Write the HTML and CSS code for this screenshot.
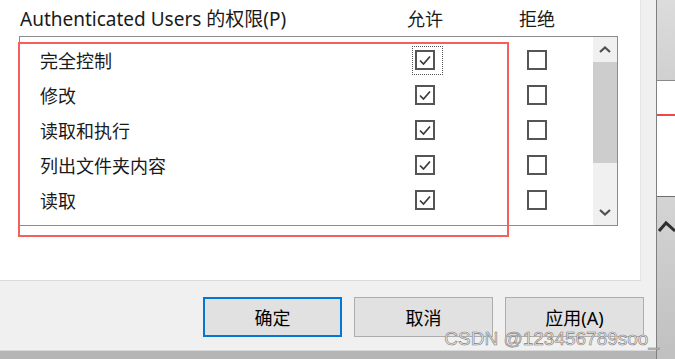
FILE: index.html
```html
<!DOCTYPE html>
<html lang="zh-CN">
<head>
    <meta charset="UTF-8">
    <meta name="viewport" content="width=device-width, initial-scale=1.0">
    <title>权限</title>
    <link rel="stylesheet" href="styles.css">
</head>

<body>

    <div class="dialog">
        <!-- Permission panel -->
        <div class="panel">
            <div class="perm-head">
                <span class="head-label">Authenticated Users 的权限(P)</span>
                <span class="head-col">允许</span>
                <span></span>
                <span class="head-col">拒绝</span>
            </div>

            <div class="perm-list">
                <div class="rows">
                    <div class="row">
                        <span class="label">完全控制</span>
                        <span class="box checked focus"><svg viewBox="0 0 16 16"><polyline points="3,8.5 6.5,12 13,4.5"/></svg></span>
                        <span></span>
                        <span class="box"></span>
                    </div>
                    <div class="row">
                        <span class="label">修改</span>
                        <span class="box checked"><svg viewBox="0 0 16 16"><polyline points="3,8.5 6.5,12 13,4.5"/></svg></span>
                        <span></span>
                        <span class="box"></span>
                    </div>
                    <div class="row">
                        <span class="label">读取和执行</span>
                        <span class="box checked"><svg viewBox="0 0 16 16"><polyline points="3,8.5 6.5,12 13,4.5"/></svg></span>
                        <span></span>
                        <span class="box"></span>
                    </div>
                    <div class="row">
                        <span class="label">列出文件夹内容</span>
                        <span class="box checked"><svg viewBox="0 0 16 16"><polyline points="3,8.5 6.5,12 13,4.5"/></svg></span>
                        <span></span>
                        <span class="box"></span>
                    </div>
                    <div class="row">
                        <span class="label">读取</span>
                        <span class="box checked"><svg viewBox="0 0 16 16"><polyline points="3,8.5 6.5,12 13,4.5"/></svg></span>
                        <span></span>
                        <span class="box"></span>
                    </div>
                    <!-- next row, scrolled out of view -->
                    <div class="row">
                        <span class="label"></span>
                        <span class="box"></span>
                        <span></span>
                        <span class="box"></span>
                    </div>
                </div>

                <!-- Scrollbar -->
                <div class="scrollbar">
                    <div class="sb-btn"><svg viewBox="0 0 12 7"><polyline points="1,6 6,1.5 11,6"/></svg></div>
                    <div class="sb-thumb"></div>
                    <div class="sb-track"></div>
                    <div class="sb-btn"><svg viewBox="0 0 12 7"><polyline points="1,1 6,5.5 11,1"/></svg></div>
                </div>
            </div>

            <!-- annotation -->
            <div class="mark"></div>
        </div>

        <!-- Buttons -->
        <div class="footer">
            <button class="btn default">确定</button>
            <button class="btn">取消</button>
            <button class="btn">应用(A)</button>
        </div>
        <div class="bottom-edge"></div>
    </div>

    <!-- window behind -->
    <div class="behind">
        <div class="behind-top"></div>
        <div class="behind-mid"><div class="red-line"></div></div>
        <div class="behind-low"><svg viewBox="0 0 18 20"><polyline points="2,18 9,10 18,18"/></svg></div>
    </div>

    <div class="watermark">CSDN @123456789soo_</div>

</body>

</html>
```

FILE: styles.css
```css
/* General Styles */
body {
    margin: 0;
    width: 675px;
    height: 359px;
    overflow: hidden;
    display: flex;
    background: #c4c4c4;
    font-family: 'Noto Sans', 'Noto Sans CJK SC', sans-serif;
    color: #1a1a1a;
    position: relative;
}

.dialog {
    width: 657px;
    display: flex;
    flex-direction: column;
    background: #f0f0f0;
}

.panel {
    position: relative;
    width: 641px;
    height: 281px;
    box-sizing: border-box;
    padding-left: 19px;
    background: #fff;
    border-right: 1px solid #e4e4e4;
    border-bottom: 1px solid #dadada;
}

/* Header */
.perm-head {
    display: grid;
    grid-template-columns: 386px 40px 72px 40px;
    height: 36px;
    align-items: center;
    font-size: 18px;
}

.head-label {
    padding-left: 1px;
    white-space: nowrap;
    font-size: 19px;
}

.head-col {
    text-align: center;
    white-space: nowrap;
}

/* List */
.perm-list {
    width: 599px;
    height: 190px;
    box-sizing: border-box;
    border: 1px solid #8c8c8c;
    display: flex;
    overflow: hidden;
}

.rows {
    flex: 1;
    padding-top: 5px;
}

.row {
    display: grid;
    grid-template-columns: 395px 20px 92px 20px;
    height: 35px;
    align-items: center;
}

.label {
    padding-left: 20px;
    font-size: 18px;
}

.box {
    position: relative;
    width: 20px;
    height: 20px;
    box-sizing: border-box;
    border: 2px solid #555;
    background: #fff;
}

.box svg {
    display: block;
    width: 16px;
    height: 16px;
    fill: none;
    stroke: #3a3a3a;
    stroke-width: 1.7;
}

.focus::after {
    content: "";
    position: absolute;
    left: -5px;
    top: -6px;
    right: -10px;
    bottom: -7px;
    border: 1px dotted #555;
}

/* Scrollbar */
.scrollbar {
    width: 24px;
    display: flex;
    flex-direction: column;
    background: #f0f0f0;
}

.sb-btn {
    height: 25px;
    display: flex;
    align-items: center;
    justify-content: center;
}

.sb-btn svg {
    width: 12px;
    height: 7px;
    fill: none;
    stroke: #505050;
    stroke-width: 2.2;
}

.sb-thumb {
    height: 101px;
    background: #cdcdcd;
}

.sb-track {
    flex: 1;
}

.mark {
    position: absolute;
    left: 18px;
    top: 42px;
    width: 491px;
    height: 195px;
    box-sizing: border-box;
    border: 2px solid #f46060;
}

/* Footer */
.footer {
    height: 70px;
    box-sizing: border-box;
    display: flex;
    justify-content: flex-end;
    gap: 12px;
    padding: 16px 12px 0 0;
    border-bottom: 1px solid #d8d8d8;
}

.btn {
    width: 139px;
    height: 40px;
    background: #e1e1e1;
    border: 1px solid #adadad;
    font-family: 'Noto Sans', 'Noto Sans CJK SC', sans-serif;
    font-size: 18px;
    color: #000;
    padding: 0;
}

.btn.default {
    border: 2px solid #0078d7;
}

.bottom-edge {
    flex: 1;
    background: #b5b5b5;
}

/* Window behind */
.behind {
    flex: 1;
    display: flex;
    flex-direction: column;
    border-left: 1px solid #808080;
}

.behind-top {
    height: 80px;
    background: linear-gradient(#dcdcdc, #d0d0d0);
    border-bottom: 1px solid #8a8a8a;
}

.behind-mid {
    height: 116px;
    background: #fff;
    border-bottom: 1px solid #6e6e6e;
    padding-top: 33px;
    box-sizing: border-box;
}

.red-line {
    height: 2px;
    background: #f04848;
}

.behind-low {
    flex: 1;
    background: linear-gradient(#d4d4d4, #c0c0c0);
    padding-top: 16px;
}

.behind-low svg {
    display: block;
    width: 18px;
    height: 20px;
    fill: none;
    stroke: #2e2e2e;
    stroke-width: 3;
}

.watermark {
    position: absolute;
    right: 16px;
    bottom: 9px;
    font-family: 'Liberation Sans', sans-serif;
    font-size: 19px;
    color: #ececec;
    -webkit-text-stroke: 0.6px #7c7c7c;
    white-space: nowrap;
}
```
